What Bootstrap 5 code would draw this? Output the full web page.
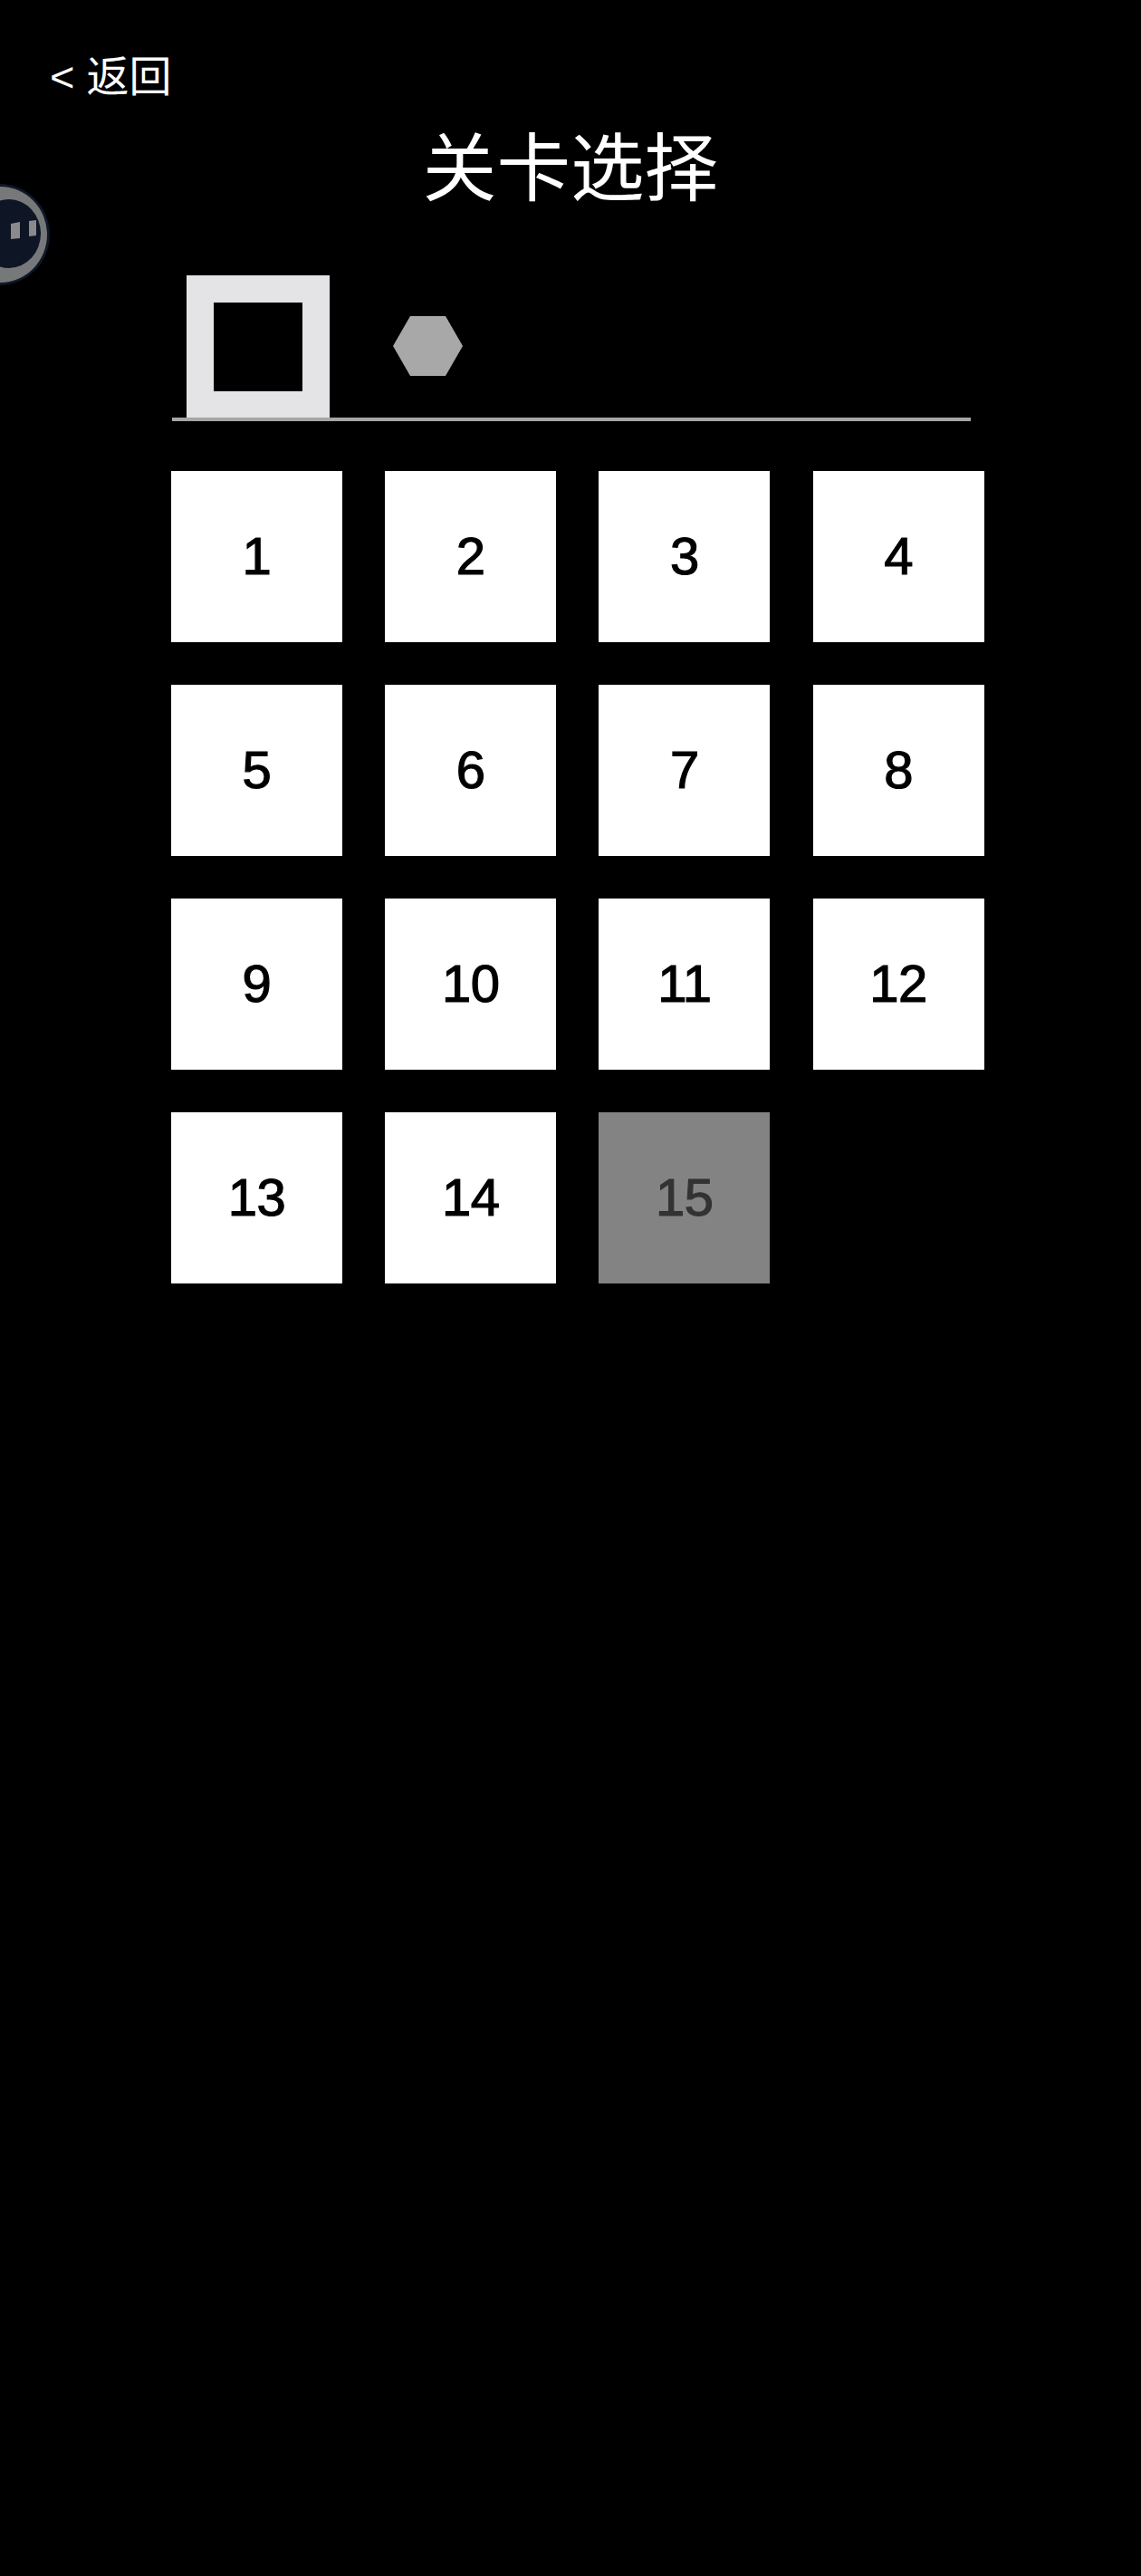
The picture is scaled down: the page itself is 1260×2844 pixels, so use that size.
<!DOCTYPE html>
<html lang="zh-CN">
<head>
<meta charset="utf-8">
<title>关卡选择</title>
<link rel="stylesheet" href="https://cdn.jsdelivr.net/npm/bootstrap@5.3.0/dist/css/bootstrap.min.css">
<style>
html,body{background:#000;margin:0}
.stage{position:relative;width:1260px;height:2844px;overflow:hidden;background:#000;font-family:"Liberation Sans","Noto Sans CJK SC",sans-serif;color:#fff}
.back-row{padding:54px 0 0 55px;height:116px}
.back-link{font-size:47px;line-height:62px;color:#fff;text-decoration:none;display:inline-block}
.page-title{font-size:81.6px;line-height:104px;font-weight:400;margin:0;text-align:center;height:188px;padding-top:19px}
.tab-bar{width:882px;height:161px;margin-left:190px;border-bottom:4px solid #a6a6a6;padding-left:16px;box-sizing:border-box}
.tab-on{width:158px;height:157px;border:30px solid #e4e4e6;border-bottom-width:29px;background:#000;box-sizing:border-box}
.tab-off{width:77px;height:66px;margin-left:70px;margin-top:45px;display:block}
.tile-grid{display:grid;grid-template-columns:repeat(4,189px);grid-auto-rows:189px;column-gap:47.2px;row-gap:47px;margin:55px 0 0 189px;width:898px}
.tile{background:#fff;color:#000;font-size:58px;line-height:1;letter-spacing:-.5px;padding-bottom:2px;-webkit-text-stroke:1.2px currentColor;display:flex;align-items:center;justify-content:center}
.tile-locked{background:#838383;color:#333}
.float-ball{position:absolute;left:-59px;top:203px;width:114px;height:112px}
</style>
</head>
<body>
<div class="stage">
  <svg class="float-ball" viewBox="0 0 114 112" aria-hidden="true">
    <ellipse cx="58" cy="56" rx="56" ry="56" fill="#101726"/>
    <ellipse cx="59" cy="56" rx="52" ry="53" fill="#76787a"/>
    <ellipse cx="69" cy="55" rx="35" ry="38" fill="#0e1524"/>
    <polygon points="71,44 81,42 81,60 71,61" fill="#8a8a8a"/>
    <polygon points="91,41 99,40 99,57 91,58" fill="#8a8a8a"/>
  </svg>
  <div class="back-row"><a class="back-link" href="#">&lt; 返回</a></div>
  <h1 class="page-title">关卡选择</h1>
  <div class="tab-bar d-flex align-items-start">
    <div class="tab-on"></div>
    <svg class="tab-off" viewBox="0 0 77 66" aria-hidden="true"><polygon points="19,0 58,0 77,33 58,66 19,66 0,33" fill="#a8a8a8"/></svg>
  </div>
  <div class="tile-grid">
    <div class="tile">1</div><div class="tile">2</div><div class="tile">3</div><div class="tile">4</div>
    <div class="tile">5</div><div class="tile">6</div><div class="tile">7</div><div class="tile">8</div>
    <div class="tile">9</div><div class="tile">10</div><div class="tile">11</div><div class="tile">12</div>
    <div class="tile">13</div><div class="tile">14</div><div class="tile tile-locked">15</div>
  </div>
</div>
<script src="https://cdn.jsdelivr.net/npm/bootstrap@5.3.0/dist/js/bootstrap.bundle.min.js"></script>
</body>
</html>
